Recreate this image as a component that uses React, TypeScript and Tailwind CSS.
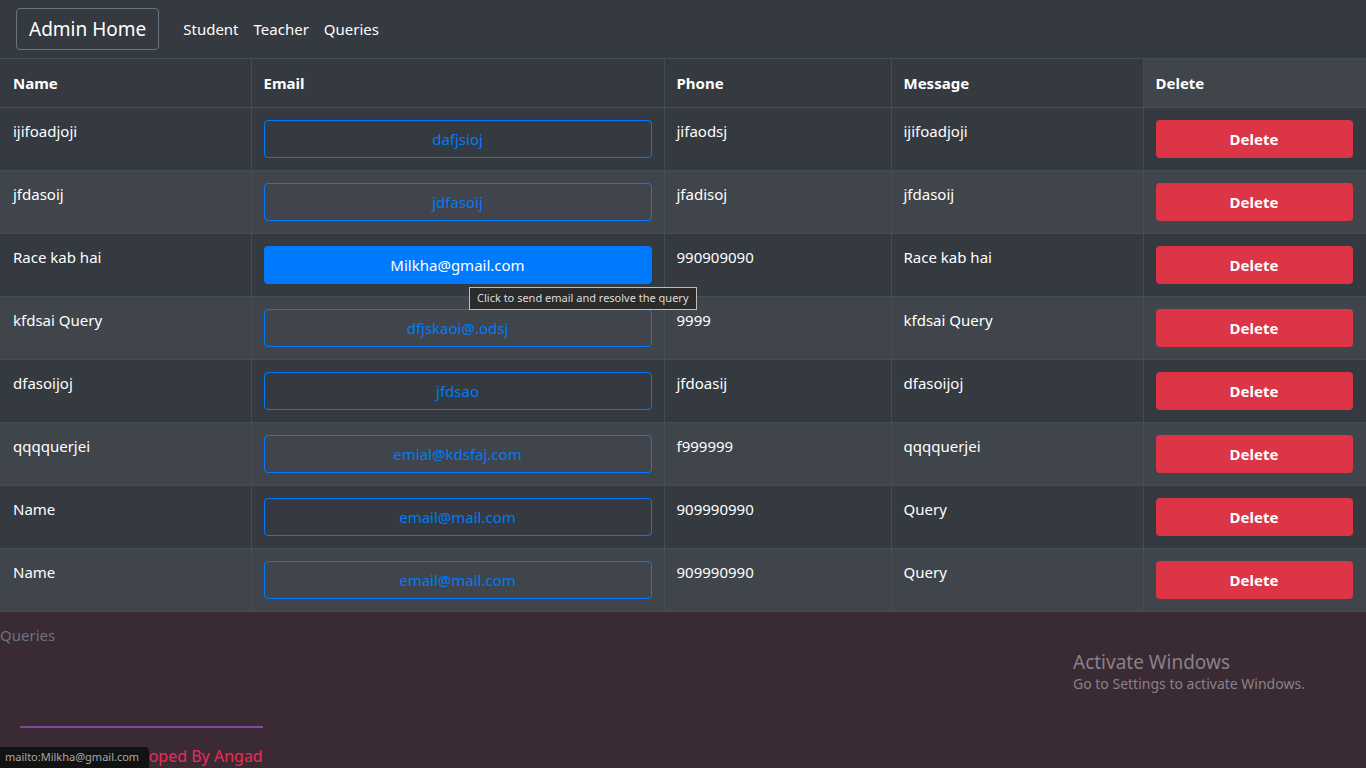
import React from "react";

interface Query {
  name: string;
  email: string;
  phone: string;
  message: string;
}

const queries: Query[] = [
  { name: "ijifoadjoji", email: "dafjsioj", phone: "jifaodsj", message: "ijifoadjoji" },
  { name: "jfdasoij", email: "jdfasoij", phone: "jfadisoj", message: "jfdasoij" },
  { name: "Race kab hai", email: "Milkha@gmail.com", phone: "990909090", message: "Race kab hai" },
  { name: "kfdsai Query", email: "dfjskaoi@.odsj", phone: "9999", message: "kfdsai Query" },
  { name: "dfasoijoj", email: "jfdsao", phone: "jfdoasij", message: "dfasoijoj" },
  { name: "qqqquerjei", email: "emial@kdsfaj.com", phone: "f999999", message: "qqqquerjei" },
  { name: "Name", email: "email@mail.com", phone: "909990990", message: "Query" },
  { name: "Name", email: "email@mail.com", phone: "909990990", message: "Query" },
];

const font = { fontFamily: '"Noto Sans", "Open Sans", sans-serif' };

const App: React.FC = () => {
  return (
    <div className="w-[1366px] h-[768px] overflow-hidden bg-[#3a2a34] relative" style={font}>
      {/* navbar */}
      <nav className="h-[58px] bg-[#343a40] flex items-center pl-4">
        <button className="h-[42px] px-3 border border-[#6c757d] rounded text-white text-[19px] leading-none">
          Admin Home
        </button>
        <div className="flex items-center gap-[15px] ml-6 text-white text-[15px]">
          <span>Student</span>
          <span>Teacher</span>
          <span>Queries</span>
        </div>
      </nav>

      {/* table */}
      <table className="w-full border-collapse text-white text-[15px]">
        <thead>
          <tr className="h-[49px] bg-[#343a40]">
            <th className="w-[251px] text-left font-bold pl-[13px] pr-3 border border-[#454d55] border-l-0">Name</th>
            <th className="w-[413px] text-left font-bold px-3 border border-[#454d55]">Email</th>
            <th className="w-[227px] text-left font-bold px-3 border border-[#454d55]">Phone</th>
            <th className="w-[252px] text-left font-bold px-3 border border-[#454d55]">Message</th>
            <th className="text-left font-bold px-3 border border-[#454d55] border-r-0 bg-[#3f454b]">Delete</th>
          </tr>
        </thead>
        <tbody>
          {queries.map((q, i) => {
            const hover = i === 2;
            return (
              <tr key={i} className={i % 2 === 0 ? "h-[63px] bg-[#343a40]" : "h-[63px] bg-[#3f454b]"}>
                <td className="align-top pl-[13px] pr-3 pt-3 border border-[#454d55] border-l-0">{q.name}</td>
                <td className="align-top px-3 pt-3 border border-[#454d55]">
                  <button
                    className={
                      hover
                        ? "w-full h-[38px] rounded border border-[#007bff] bg-[#007bff] text-white text-[15px]"
                        : "w-full h-[38px] rounded border border-[#007bff] text-[#007bff] text-[15px]"
                    }
                  >
                    {q.email}
                  </button>
                </td>
                <td className="align-top px-3 pt-3 border border-[#454d55]">{q.phone}</td>
                <td className="align-top px-3 pt-3 border border-[#454d55]">{q.message}</td>
                <td className="align-top px-3 pt-3 border border-[#454d55] border-r-0">
                  <button className="w-[197px] h-[38px] rounded bg-[#dc3545] text-white font-bold text-[15px]">
                    Delete
                  </button>
                </td>
              </tr>
            );
          })}
        </tbody>
      </table>

      {/* footer */}
      <div className="relative">
        <div className="pt-4 text-[#6c757d] text-[15px] leading-none">Queries</div>
        <div className="ml-5 mt-[83px] w-[243px] h-[2px] bg-[#7b4c9c]" />
        <div className="ml-[107px] mt-[20px] text-[#ee2a5a] text-[16px] leading-none">Developed By Angad</div>
      </div>

      {/* tooltip */}
      <div className="absolute left-[469px] top-[287px] h-[23px] px-[7px] flex items-center bg-[#2b2b2b] border border-[#bdbdbd] text-[#dddddd] text-[11px]">
        Click to send email and resolve the query
      </div>

      {/* status bar */}
      <div className="absolute left-0 bottom-0 h-[21px] w-[149px] flex items-center pl-[5px] bg-[#121212] rounded-tr text-[#a8a8a8] text-[11px] whitespace-nowrap overflow-hidden">
        mailto:Milkha@gmail.com
      </div>

      {/* windows watermark */}
      <div className="absolute left-[1073px] top-[650px] text-[#8b8189]">
        <div className="text-[19px] leading-6">Activate Windows</div>
        <div className="text-[14px] leading-5">Go to Settings to activate Windows.</div>
      </div>
    </div>
  );
};

export default App;
